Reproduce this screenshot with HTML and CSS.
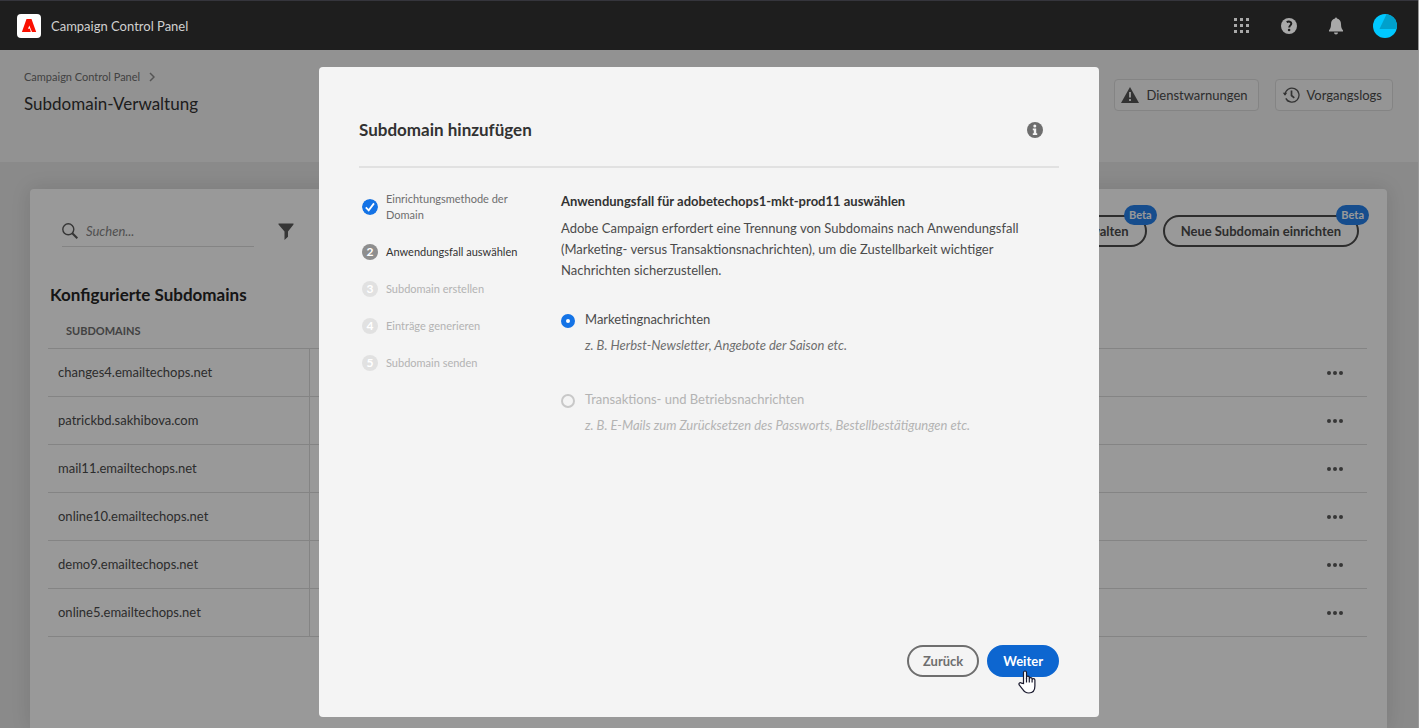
FILE: index.html
```html
<!DOCTYPE html>
<html lang="de">
<head>
<meta charset="utf-8">
<title>Campaign Control Panel</title>
<link rel="stylesheet" href="styles.css">
</head>
<body>
<div class="app">
  <header class="topbar">
    <a class="brand" href="#">
      <svg class="brand-logo" viewBox="0 0 24 24" aria-hidden="true"><rect width="24" height="24" rx="4" fill="#fff"/><path d="M9.500 5h5L19.200 18h-4.200L12.300 11.500L11 14.700h2L13.800 18H4.900z" fill="#fa0f00"/></svg>
      <span>Campaign Control Panel</span>
    </a>
    <nav class="topbar-actions">
      <button class="icon-button" type="button" aria-label="Apps">
        <svg width="16" height="16" viewBox="0 0 16 16" fill="#a9a9a9"><path d="M0 0h3v3H0zM6 0h3v3H6zM12 0h3v3h-3zM0 6h3v3H0zM6 6h3v3H6zM12 6h3v3h-3zM0 12h3v3H0zM6 12h3v3H6zM12 12h3v3h-3z"/></svg>
      </button>
      <button class="icon-button" type="button" aria-label="Hilfe">
        <svg width="16" height="16" viewBox="0 0 16 16"><circle cx="8" cy="8" r="8" fill="#a9a9a9"/><path d="M5.700 4.200C7.600 3 10.300 3.500 10.300 5.600C10.300 7.400 8.200 7.400 8.200 9.600" fill="none" stroke="#1e1e1e" stroke-width="2"/><circle cx="8.100" cy="12" r="1.300" fill="#1e1e1e"/></svg>
      </button>
      <button class="icon-button" type="button" aria-label="Benachrichtigungen">
        <svg width="16" height="18" viewBox="0 0 16 18" fill="#a9a9a9"><path d="M7 1.500a1 1 0 0 1 2 0C11.700 2 13 4.200 13 7c0 3.500.8 5 2 6.300V14.500H1v-1.200C2.200 12 3 10.500 3 7c0-2.800 1.300-5 4-5.500zM6 15.500h4a2 2 0 0 1-4 0z"/></svg>
      </button>
      <button class="icon-button" type="button" aria-label="Konto">
        <svg width="24" height="24" viewBox="0 0 24 24"><circle cx="12" cy="12" r="12" fill="#00c8ff"/><path d="M13.500 0.200A12 12 0 0 1 23.700 15H6.500z" fill="#00a0cc"/></svg>
      </button>
    </nav>
  </header>

  <section class="page-head">
    <div>
      <nav class="crumbs"><a href="#">Campaign Control Panel</a>
        <svg width="6" height="10" viewBox="0 0 6 10" fill="none" stroke="#8e8e8e" stroke-width="1.500"><path d="M1 1l4 4-4 4"/></svg>
      </nav>
      <h1>Subdomain-Verwaltung</h1>
    </div>
    <div class="head-actions">
      <button class="head-button" type="button">
        <svg width="18" height="16" viewBox="0 0 18 16"><path d="M9 0l9 16H0z" fill="#555"/><path d="M8 5h2v5.500H8zM8 12h2v2H8z" fill="#f4f4f4"/></svg>
        Dienstwarnungen
      </button>
      <button class="head-button" type="button">
        <svg width="18" height="18" viewBox="0 0 18 18" fill="none" stroke="#555" stroke-width="1.300"><path d="M3 9a7 7 0 1 1 .8 3.400M5 14.400a7 7 0 0 0 1.500 1"/><path d="M.8 6.800h4.400L3 9.800z" fill="#555" stroke="none"/><path d="M9.500 4.500v5l2.800 2.300" stroke-width="1.700"/></svg>
        Vorgangslogs
      </button>
    </div>
  </section>

  <main class="content">
    <div class="card">
      <div class="toolbar">
        <label class="search">
          <svg width="16" height="16" viewBox="0 0 16 16" fill="none" stroke="#5a5a5a"><circle cx="6.300" cy="6.300" r="5.500" stroke-width="1.400"/><path d="M10.300 10.300l5 5" stroke-width="2"/></svg>
          <input type="text" placeholder="Suchen..." aria-label="Suchen">
        </label>
        <button class="icon-button" type="button" aria-label="Filter">
          <svg width="16" height="17" viewBox="0 0 16 17" fill="#5a5a5a"><path d="M.5.500h15v1L10 8.500v5.300L6.500 17V8.500L.5 1.500z"/></svg>
        </button>
        <div class="toolbar-actions">
          <button class="pill pill-dark" type="button">Verwalten<span class="beta">Beta</span></button>
          <button class="pill pill-dark" type="button">Neue Subdomain einrichten<span class="beta">Beta</span></button>
        </div>
      </div>
      <h2>Konfigurierte Subdomains</h2>
      <table class="domains">
        <thead><tr><th>SUBDOMAINS</th><th></th></tr></thead>
        <tbody>
          <tr><td>changes4.emailtechops.net</td><td><button class="more" type="button" aria-label="Mehr"><i></i><i></i><i></i></button></td></tr>
          <tr><td>patrickbd.sakhibova.com</td><td><button class="more" type="button" aria-label="Mehr"><i></i><i></i><i></i></button></td></tr>
          <tr><td>mail11.emailtechops.net</td><td><button class="more" type="button" aria-label="Mehr"><i></i><i></i><i></i></button></td></tr>
          <tr><td>online10.emailtechops.net</td><td><button class="more" type="button" aria-label="Mehr"><i></i><i></i><i></i></button></td></tr>
          <tr><td>demo9.emailtechops.net</td><td><button class="more" type="button" aria-label="Mehr"><i></i><i></i><i></i></button></td></tr>
          <tr><td>online5.emailtechops.net</td><td><button class="more" type="button" aria-label="Mehr"><i></i><i></i><i></i></button></td></tr>
        </tbody>
      </table>
    </div>
  </main>
</div>

<div class="overlay">
  <form class="dialog" role="dialog" aria-modal="true" aria-labelledby="dialog-title">
    <header class="dialog-head">
      <h2 id="dialog-title">Subdomain hinzufügen</h2>
      <button class="icon-button" type="button" aria-label="Information">
        <svg width="16" height="16" viewBox="0 0 16 16"><circle cx="8" cy="8" r="8" fill="#6e6e6e"/><circle cx="7.800" cy="3.900" r="1.500" fill="#f4f4f4"/><path d="M5.800 6.500h3.400V11.300h1V13H5.800v-1.700h1V8.200h-1z" fill="#f4f4f4"/></svg>
      </button>
    </header>
    <div class="dialog-body">
      <ol class="steps">
        <li class="done"><svg class="mark" viewBox="0 0 16 16"><circle cx="8" cy="8" r="8" fill="#1473e6"/><path d="M3.800 8.400l2.900 3 5.300-7" fill="none" stroke="#fff" stroke-width="1.800"/></svg><span>Einrichtungsmethode der Domain</span></li>
        <li class="current"><b class="mark">2</b><span>Anwendungsfall auswählen</span></li>
        <li><b class="mark">3</b><span>Subdomain erstellen</span></li>
        <li><b class="mark">4</b><span>Einträge generieren</span></li>
        <li><b class="mark">5</b><span>Subdomain senden</span></li>
      </ol>
      <div class="choice">
        <h3>Anwendungsfall für adobetechops1-mkt-prod11 auswählen</h3>
        <p class="intro">Adobe Campaign erfordert eine Trennung von Subdomains nach Anwendungsfall (Marketing- versus Transaktionsnachrichten), um die Zustellbarkeit wichtiger Nachrichten sicherzustellen.</p>
        <div class="option">
          <input type="radio" name="usecase" id="marketing" checked>
          <div><label for="marketing">Marketingnachrichten</label><p>z. B. Herbst-Newsletter, Angebote der Saison etc.</p></div>
        </div>
        <div class="option disabled">
          <input type="radio" name="usecase" id="transactional" disabled>
          <div><label for="transactional">Transaktions- und Betriebsnachrichten</label><p>z. B. E-Mails zum Zurücksetzen des Passworts, Bestellbestätigungen etc.</p></div>
        </div>
      </div>
    </div>
    <footer class="dialog-foot">
      <button class="pill pill-quiet" type="button">Zurück</button>
      <button class="pill pill-primary" type="button">Weiter
        <svg class="pointer" width="18" height="24" viewBox="0 0 18 24"><path d="M5.500 13.500V2.500a1.500 1.500 0 0 1 3 0V9V7.500a1.400 1.400 0 0 1 2.800 0V9a1.400 1.400 0 0 1 2.800 0v1a1.400 1.400 0 0 1 2.800 0v6c0 4-2 7-6 7-3.500 0-5-1.500-6.400-4L1.200 15c-.9-1.600.9-3 2.200-1.900z" fill="#fff" stroke="#1a1a2e" stroke-width="1.200"/><path d="M8.500 8v4.500M11.300 9v3.500M14.100 10v2.500" stroke="#1a1a2e" stroke-width="1.200"/></svg>
      </button>
    </footer>
  </form>
</div>
</body>
</html>
```
FILE: styles.css
```css
:root {
  --font: Lato, "Noto Sans", sans-serif;
}
* { box-sizing: border-box; }
html, body { height: 100%; }
body {
  margin: 0;
  overflow: hidden;
  font: 13px/20px var(--font);
  color: #4b4b4b;
  background: #e6e6e6;
}
h1, h2, h3, p, ol { margin: 0; padding: 0; }
button { font: inherit; color: inherit; cursor: pointer; }
a { color: inherit; text-decoration: none; }
svg { display: block; flex: none; }

.app {
  height: 100%;
  display: flex;
  flex-direction: column;
  border-right: 1px solid #fff;
}
.icon-button { display: flex; padding: 0; border: 0; background: none; }

.topbar {
  position: relative;
  z-index: 3;
  flex: none;
  height: 50px;
  padding: 0 21px 0 17px;
  display: flex;
  align-items: center;
  justify-content: space-between;
  background: #1e1e1e;
  border-top: 1px solid #35353c;
}
.brand { display: flex; align-items: center; gap: 10px; color: #d0d0d0; }
.brand-logo { width: 24px; height: 24px; }
.topbar-actions { display: flex; align-items: center; }
.topbar-actions .icon-button + .icon-button { margin-left: 31px; }
.topbar-actions .icon-button:last-child { margin-left: 29px; }

.page-head {
  flex: none;
  height: 112px;
  padding: 17px 25px 0 24px;
  display: flex;
  justify-content: space-between;
  align-items: flex-start;
  background: #f4f4f4;
}
.crumbs { display: flex; align-items: center; gap: 9px; font-size: 11px; color: #6e6e6e; }
h1 { margin-top: 5px; font-size: 17px; line-height: 24px; font-weight: 400; color: #323232; }
.head-actions { display: flex; gap: 16px; padding-top: 12px; }
.head-button {
  display: flex;
  align-items: center;
  gap: 7px;
  height: 32px;
  padding: 0 10px 0 6px;
  border: 1px solid #dcdcdc;
  border-radius: 4px;
  background: #f8f8f8;
}

.content { flex: 1; min-height: 0; padding: 27px 31px 0 30px; display: flex; }
.card {
  flex: 1;
  padding: 26px 20px 0 18px;
  border-radius: 4px 4px 0 0;
  background: #fff;
  box-shadow: 0 0 20px rgba(0, 0, 0, .12);
}
.toolbar { display: flex; align-items: center; padding: 0 8px 0 14px; }
.search {
  display: flex;
  align-items: center;
  gap: 8px;
  width: 192px;
  height: 32px;
  margin-right: 24px;
  border-bottom: 1px solid #dcdcdc;
}
.search input {
  flex: 1;
  min-width: 0;
  padding: 0;
  border: 0;
  outline: 0;
  background: none;
  font: italic 13px/20px var(--font);
}
.search input::placeholder { color: #868686; }
.toolbar-actions { display: flex; gap: 16px; margin-left: auto; }
.pill {
  position: relative;
  height: 32px;
  padding: 0 14px;
  border: 2px solid;
  border-radius: 16px;
  background: none;
  font-weight: 700;
  white-space: nowrap;
}
.pill-dark { padding: 0 16px; }
.beta {
  position: absolute;
  top: -12px;
  right: -12px;
  padding: 0 5px;
  border-radius: 10px;
  background: #2680eb;
  color: #fff;
  font-size: 11px;
  line-height: 20px;
}
.card h2 { margin: 36px 0 0 2px; font-size: 17px; line-height: 24px; color: #252525; }
.domains { width: 100%; margin-top: 8px; border-collapse: collapse; }
.domains th {
  height: 33px;
  padding: 0 18px;
  text-align: left;
  font-size: 11px;
  color: #6e6e6e;
}
.domains td { height: 48px; padding: 0 10px; border-top: 1px solid #dcdcdc; border-bottom: 1px solid #dcdcdc; }
.domains td:first-child { width: 261px; border-right: 1px solid #dcdcdc; }
.domains td:last-child { padding: 2px 24px 0 0; }
.more { display: flex; gap: 2px; margin-left: auto; padding: 0; border: 0; background: none; }
.more i { width: 4px; height: 4px; border-radius: 50%; background: #5a5a5a; }

.overlay {
  position: fixed;
  inset: 0;
  z-index: 2;
  padding: 67px 1px 11px 0;
  display: flex;
  justify-content: center;
  background: rgba(0, 0, 0, .4);
}
.dialog {
  width: 780px;
  padding: 40px;
  display: flex;
  flex-direction: column;
  border-radius: 4px;
  background: #f4f4f4;
}
.dialog-head {
  display: flex;
  align-items: center;
  justify-content: space-between;
  padding: 11px 16px 24px 0;
  border-bottom: 2px solid #e1e1e1;
}
.dialog-head h2 { font-size: 17px; line-height: 24px; color: #323232; }
.dialog-body { flex: 1; display: flex; }
.steps { flex: none; width: 202px; padding: 23px 24px 0 3px; list-style: none; }
.steps li { display: flex; align-items: center; gap: 8px; margin-bottom: 21px; font-size: 11px; line-height: 16px; color: #b3b3b3; }
.mark {
  flex: none;
  width: 16px;
  height: 16px;
  border-radius: 50%;
  background: #e1e1e1;
  color: #fff;
  font-size: 12px;
  text-align: center;
}
.steps .done { color: #6e6e6e; }
.steps .current { color: #323232; }
.current .mark { background: #8e8e8e; }
.choice { flex: 1; padding-top: 23px; }
.choice h3 { font-size: 13px; line-height: 20px; color: #323232; }
.intro { margin: 7px 0 28px; line-height: 21px; }
.option { display: flex; align-items: flex-start; gap: 10px; margin-bottom: 34px; }
.option input {
  appearance: none;
  flex: none;
  width: 14px;
  height: 14px;
  margin: 5px 0 0;
  border: 2px solid #c8c8c8;
  border-radius: 50%;
}
.option input:checked { border: 5px solid #1473e6; background: #fff; }
.option label { display: block; }
.option p { margin-top: 6px; font-style: italic; color: #6e6e6e; }
.option.disabled, .option.disabled p { color: #b3b3b3; }
.dialog-foot { display: flex; justify-content: flex-end; gap: 8px; }
.pill-quiet { color: #6e6e6e; }
.pill-primary { background: #0d66d0; border-color: #0d66d0; color: #fff; }
.pointer { position: absolute; left: 29px; top: 23px; }
```
